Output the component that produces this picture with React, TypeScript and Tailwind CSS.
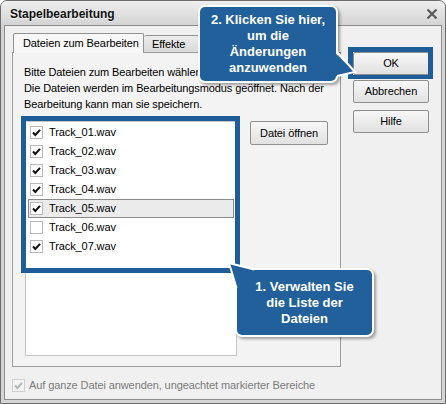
import type { ReactNode } from "react"

const FONT = { fontFamily: '"Liberation Sans", Arial, sans-serif' }

const TRACKS = [
  { name: "Track_01.wav", checked: true },
  { name: "Track_02.wav", checked: true },
  { name: "Track_03.wav", checked: true },
  { name: "Track_04.wav", checked: true },
  { name: "Track_05.wav", checked: true, selected: true },
  { name: "Track_06.wav", checked: false },
  { name: "Track_07.wav", checked: true },
]

function CheckBox({ checked, disabled }: { checked: boolean; disabled?: boolean }) {
  return (
    <span
      className={`flex h-[13px] w-[13px] shrink-0 items-center justify-center border ${
        disabled ? "border-[#cfcfcf] bg-[#f4f4f4]" : "border-[#b9b9b9] bg-white"
      }`}
    >
      {checked && (
        <svg width="11" height="11" viewBox="0 0 11 11">
          <polyline
            points="2,5.5 4.3,8 9,2.8"
            fill="none"
            stroke={disabled ? "#b4b4b4" : "#111"}
            strokeWidth="2"
          />
        </svg>
      )}
    </span>
  )
}

function WinButton({ children, className = "" }: { children: ReactNode; className?: string }) {
  return (
    <div
      className={`flex items-center justify-center rounded-[2px] border border-[#8f8f8f] bg-gradient-to-b from-[#f7f7f7] to-[#e1e1e1] text-[11px] tracking-[-0.1px] text-black ${className}`}
    >
      {children}
    </div>
  )
}

export default function App() {
  return (
    <div className="relative h-[404px] w-[446px] overflow-hidden bg-white" style={FONT}>
      <div className="flex h-full flex-col rounded-t-[7px] border border-[#6b6b6b] bg-[#d4d4d4]">
        {/* title bar */}
        <div className="flex h-[24px] items-center justify-between rounded-t-[6px] bg-gradient-to-b from-[#eeeeee] to-[#d4d4d4] pl-[9px] pr-[7px] pt-[2px]">
          <span className="text-[12px] font-bold text-[#111] [text-shadow:0_1px_0_#f8f8f8]">Stapelbearbeitung</span>
          <svg width="12" height="12" viewBox="0 0 12 12">
            <path d="M1.5 1.5 L10.5 10.5 M10.5 1.5 L1.5 10.5" stroke="#5a5a5a" strokeWidth="2.2" />
          </svg>
        </div>

        {/* client area */}
        <div className="mx-[3px] mb-[3px] flex flex-1 flex-col border border-[#8c8c8c] bg-[#f0f0f0] tracking-[-0.1px]">
          <div className="flex pl-[7px] pt-[6px]">
            <div className="w-[329px]">
              <div className="flex h-[20px] items-end">
                <div className="relative z-10 -mb-px ml-[1px] flex h-[20px] w-[131px] items-center rounded-t-[2px] border border-b-0 border-[#939393] bg-[#f7f7f7] pl-[9px] text-[11px] text-black">
                  Dateien zum Bearbeiten
                </div>
                <div className="flex h-[17px] items-center rounded-t-[2px] border border-b-0 border-l-0 border-[#939393] bg-gradient-to-b from-[#ececec] to-[#dadada] pl-[8px] pr-[14px] text-[11px] text-black">
                  Effekte
                </div>
              </div>
              <div className="h-[315px] border border-[#9c9c9c] bg-[#f3f3f3] pl-[11px] pt-[11px]">
                <p className="text-[11px] leading-[16px] text-black">Bitte Dateien zum Bearbeiten wählen</p>
                <p className="text-[11px] leading-[16px] text-black">
                  Die Dateien werden im Bearbeitungsmodus geöffnet. Nach der
                  <br />
                  Bearbeitung kann man sie speichern.
                </p>
                <div className="mt-[9px] flex items-start">
                  <div className="ml-[1px] h-[235px] w-[212px] border border-[#c6c6c6] bg-white pt-[1px]">
                    {TRACKS.map((t) => (
                      <div
                        key={t.name}
                        className={`mx-[2px] flex h-[19px] items-center gap-[6px] border pl-[1px] text-[11px] text-black ${
                          t.selected ? "border-[#8a8a8a] bg-[#ebebeb]" : "border-transparent"
                        }`}
                      >
                        <CheckBox checked={t.checked} />
                        <span>{t.name}</span>
                      </div>
                    ))}
                  </div>
                  <WinButton className="ml-[13px] h-[24px] w-[78px]">Datei öffnen</WinButton>
                </div>
              </div>
            </div>

            <div className="ml-[12px] flex flex-col pt-[20px]">
              <WinButton className="h-[23px] w-[76px]">OK</WinButton>
              <WinButton className="mt-[5px] h-[23px] w-[76px]">Abbrechen</WinButton>
              <WinButton className="mt-[7px] h-[23px] w-[76px]">Hilfe</WinButton>
            </div>
          </div>

          <div className="mt-[10px] flex items-center gap-[4px] pl-[7px]">
            <CheckBox checked disabled />
            <span className="text-[11px] text-[#7b7b7b]">Auf ganze Datei anwenden, ungeachtet markierter Bereiche</span>
          </div>
        </div>
      </div>

      {/* annotation frames */}
      <div className="absolute left-[348px] top-[47px] h-[32px] w-[85px] border-[5px] border-b-[4px] border-[#1f5d99]" />
      <div className="absolute left-[21px] top-[116px] h-[157px] w-[219px] border-[5px] border-[#1f5d99]" />

      {/* callouts */}
      <div className="absolute left-[198px] top-[5px] flex h-[78px] w-[140px] items-center justify-center rounded-[7px] border-2 border-white bg-[#22609c] text-center text-[13px] font-bold leading-[16px] text-white shadow-[2px_2px_3px_rgba(0,0,0,0.35)]">
        <div>
          2. Klicken Sie hier,
          <br />
          um die
          <br />
          Änderungen
          <br />
          anzuwenden
        </div>
      </div>
      <div className="absolute left-[235px] top-[268px] flex h-[69px] w-[139px] items-center justify-center rounded-[7px] border-2 border-white bg-[#22609c] text-center text-[13px] font-bold leading-[16px] text-white shadow-[2px_2px_3px_rgba(0,0,0,0.35)]">
        <div>
          1. Verwalten Sie
          <br />
          die Liste der
          <br />
          Dateien
        </div>
      </div>

      {/* callout tails */}
      <svg className="pointer-events-none absolute left-0 top-0" width="446" height="404" viewBox="0 0 446 404">
        <polygon points="333,51 355,72 333,77" fill="#22609c" />
        <polyline points="337,52 355,72 337,76" fill="none" stroke="#fff" strokeWidth="2" />
        <polygon points="229,263 254,269.5 254,275 241,275 241,288 236.5,288" fill="#22609c" />
        <polyline points="254,269.5 229,263 236.5,288" fill="none" stroke="#fff" strokeWidth="2" />
      </svg>
    </div>
  )
}
